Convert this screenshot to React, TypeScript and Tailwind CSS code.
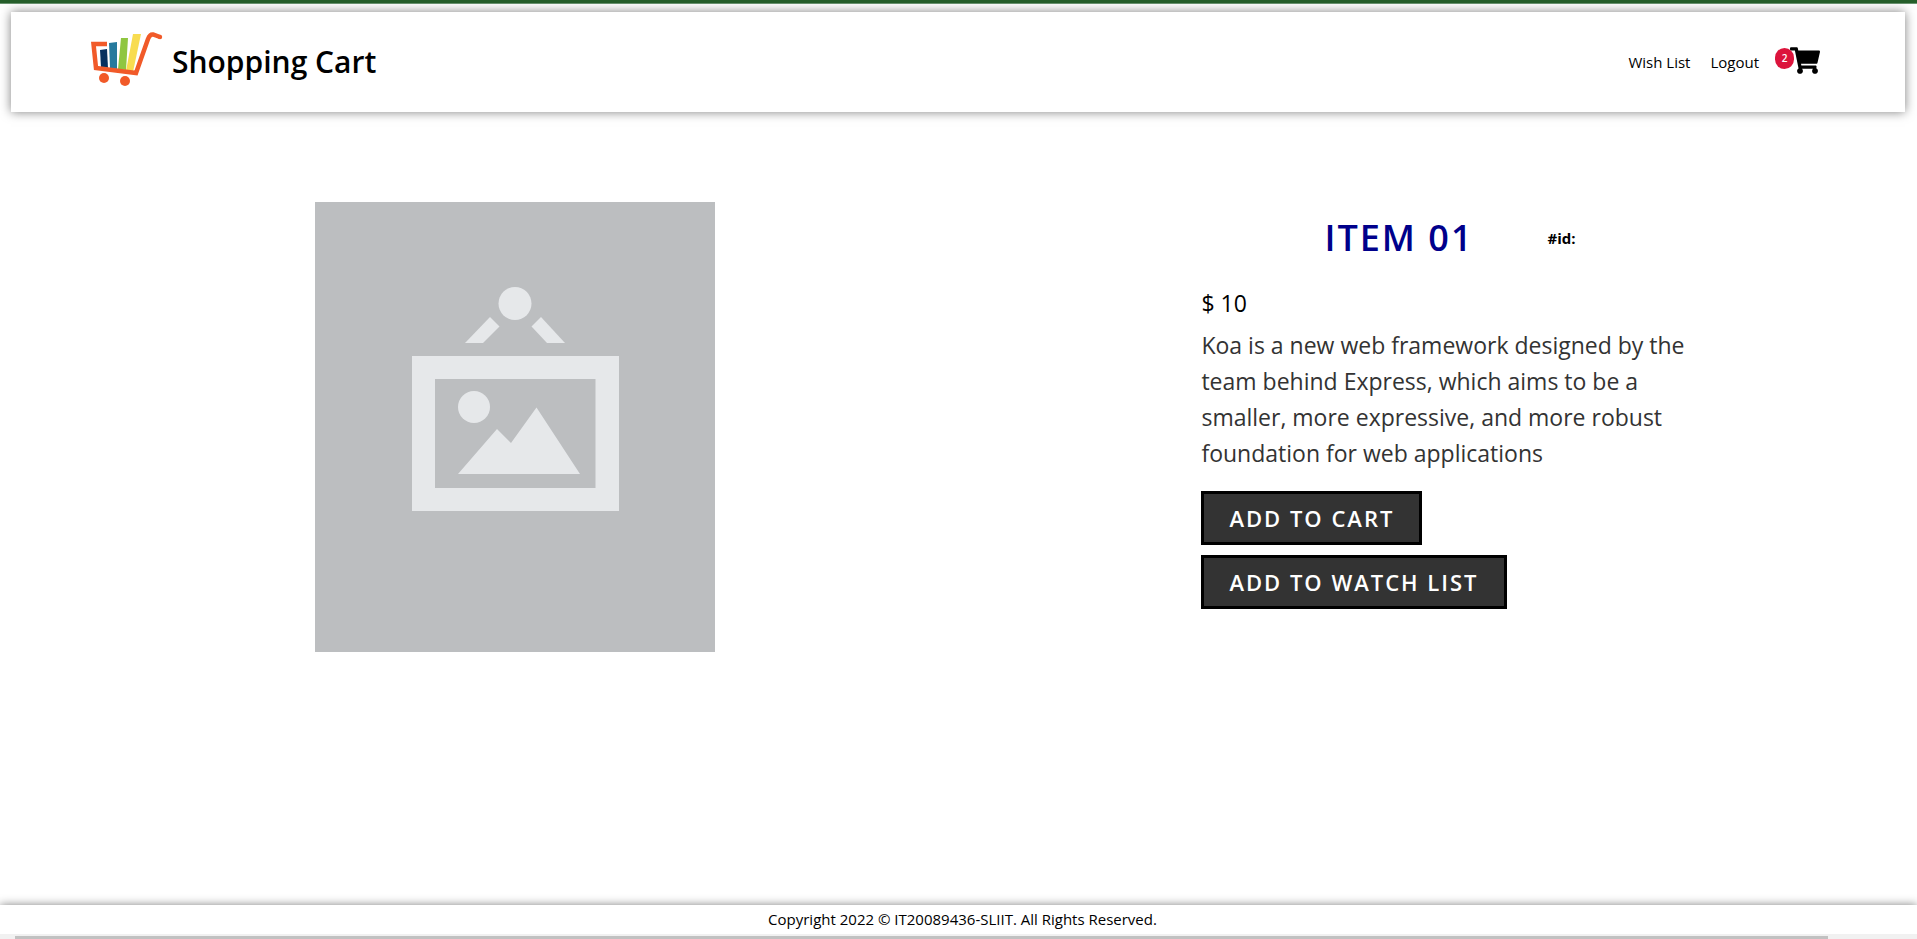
import { FaShoppingCart } from "react-icons/fa";

function Logo() {
  return (
    <svg viewBox="0 0 72 56" className="h-14 w-18" aria-hidden="true">
      <path d="M9 18 L16 17 L17 36 L10 35 Z" fill="#06305f" />
      <path d="M18 11 L26 10 L26 37 L19 36 Z" fill="#267a9d" />
      <path d="M30 6 L37 6 L35 38 L27 37 Z" fill="#8fc641" />
      <path d="M42 2 L50 2 L42 40 L35 39 Z" fill="#f8dc50" />
      <path d="M16 12 H2.500 L5 36 L45 41 L57 7 Q59 2 62 2.500 L69 5" fill="none" stroke="#f15a29" strokeWidth="4.500" strokeLinecap="butt" strokeLinejoin="miter" />
      <circle cx="69" cy="5" r="2.200" fill="#f15a29" />
      <circle cx="13" cy="46" r="5" fill="#f15a29" />
      <circle cx="34" cy="49" r="5" fill="#f15a29" />
    </svg>
  );
}

function ProductImage() {
  return (
    <svg viewBox="0 0 400 450" className="w-[400px]" role="img" aria-label="Item 01">
      <rect width="400" height="450" fill="#bcbec0" />
      <g fill="#e6e8ea">
        <circle cx="200" cy="101.500" r="16.500" />
        <path d="M175 115 L184.500 124.500 L168 141 H150 Z" />
        <path d="M226 115 L216.500 124.500 L232 141 H250 Z" />
        <path fillRule="evenodd" d="M97 154 H304 V309 H97 Z M120 177 V286 H280.500 V177 Z" />
        <circle cx="159" cy="205" r="16" />
        <path d="M143 272 L182 227 L196 241 L221.500 205.500 L265 272 Z" />
      </g>
    </svg>
  );
}

const buttonClass =
  "border-3 border-black bg-[#333] px-[25px] py-[6px] text-[22px] leading-9 font-semibold tracking-[2px] text-white uppercase";

export default function App() {
  return (
    <div className="flex min-h-screen flex-col bg-white font-['Open_Sans','Noto_Sans',sans-serif] text-black">
      <div className="h-1 border-b border-[#6a9470] bg-[#265f2b]" />
      <header className="mt-2 mr-3 ml-[11px] flex h-[100px] items-center justify-between bg-white pr-[85px] pl-20 shadow-[0_0_10px_rgba(0,0,0,0.5)]">
        <a href="#home" className="flex items-center gap-[9px]">
          <span className="pb-1">
            <Logo />
          </span>
          <span className="text-[30px] leading-10 font-semibold">Shopping Cart</span>
        </a>
        <nav className="flex items-center">
          <a href="#wishlist" className="mr-5 text-[15px]">Wish List</a>
          <a href="#logout" className="mr-4 text-[15px]">Logout</a>
          <a href="#cart" aria-label="Cart, 2 items" className="flex items-center pb-1">
            <span className="z-10 -mr-1 mb-1 flex h-[21px] w-[19px] items-center justify-center rounded-full bg-[#dc143c] text-[10px] font-semibold text-white">2</span>
            <FaShoppingCart className="h-[27px] w-[30px]" />
          </a>
        </nav>
      </header>

      <main className="flex grow items-start pt-[90px]">
        <div className="flex w-[53.7%] justify-center">
          <ProductImage />
        </div>
        <section className="ml-[172px] w-[500px]">
          <div className="flex items-center pt-[10px]">
            <h1 className="ml-[123px] text-4xl leading-[52px] font-semibold tracking-[2px] text-[#00008b] uppercase">Item 01</h1>
            <strong className="ml-[74px] text-[15px]">#id:</strong>
          </div>
          <p className="mt-[21px] text-[23px] leading-9">$ 10</p>
          <p className="mt-[6px] text-[23px] leading-9 text-[#333]">
            Koa is a new web framework designed by the team behind Express, which aims to be a smaller, more expressive, and more robust foundation for web applications
          </p>
          <div className="mt-5 flex flex-col items-start gap-[10px]">
            <button type="button" className={buttonClass}>Add to cart</button>
            <button type="button" className={buttonClass}>Add to watch list</button>
          </div>
        </section>
      </main>

      <footer className="bg-white pl-2 text-center text-[15px] leading-[29px] shadow-[0_0_10px_rgba(0,0,0,0.5)]">
        Copyright 2022 © IT20089436-SLIIT. All Rights Reserved.
      </footer>
      <div className="bg-[#f1f1f1] pt-[2px] pr-[89px] pl-[15px]">
        <div className="h-[3px] bg-[#c1c1c1]" />
      </div>
    </div>
  );
}
